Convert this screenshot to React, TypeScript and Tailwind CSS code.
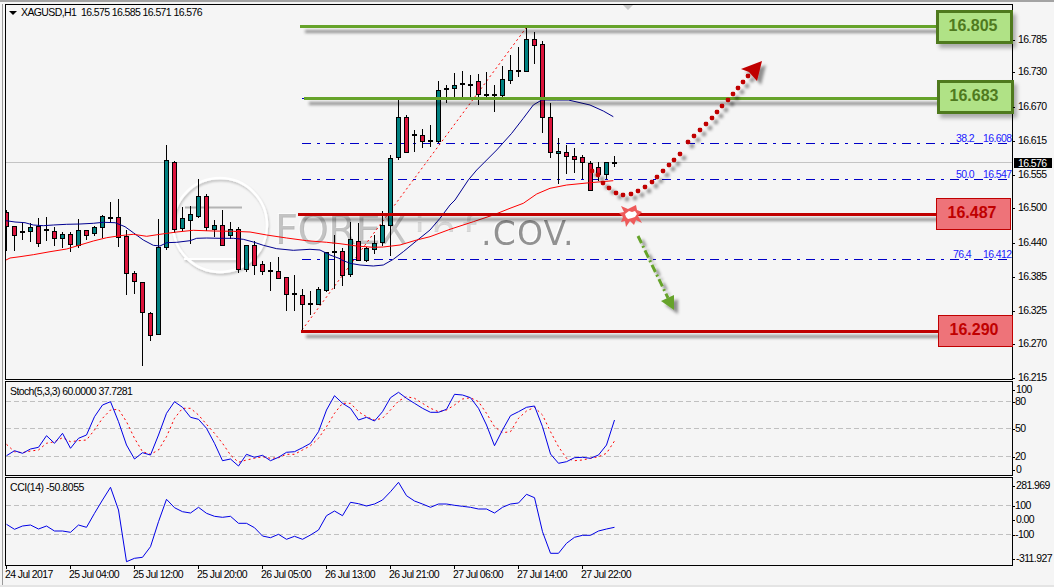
import React from "react";

type C = [number, number, number, number, "r" | "t" | "d"];
const candles: C[] = [
  [210,212,226,250,"r"],[226,226,235,250,"r"],[223,231,232,239,"d"],[223,227,231,241,"t"],[218,226,243,246,"r"],[217,229,230,240,"d"],
  [227,231,238,245,"r"],[232,234,238,247,"t"],[232,234,244,251,"r"],[219,230,245,247,"t"],[230,230,235,239,"r"],[226,227,233,235,"t"],
  [215,216,227,237,"t"],[202,217,218,222,"d"],[199,217,237,246,"r"],[230,236,273,294,"r"],[271,273,281,293,"r"],[282,282,312,365,"r"],
  [312,313,335,340,"r"],[219,247,334,334,"t"],[145,160,247,249,"t"],[161,162,229,232,"r"],[207,218,228,230,"t"],[206,214,220,243,"t"],
  [179,196,216,217,"t"],[194,196,227,230,"r"],[220,225,229,236,"t"],[210,225,245,245,"r"],[222,229,235,238,"t"],[227,229,269,272,"r"],
  [245,245,269,271,"t"],[241,245,265,274,"r"],[261,264,271,274,"r"],[262,270,271,290,"d"],[257,271,278,278,"r"],[277,277,294,310,"r"],
  [275,293,294,310,"d"],[289,295,304,330,"r"],[291,303,304,314,"d"],[287,289,304,304,"t"],[252,252,290,291,"t"],[235,251,252,288,"d"],
  [248,251,275,285,"r"],[222,239,274,276,"t"],[223,241,260,260,"r"],[247,248,260,261,"t"],[235,243,249,253,"t"],[211,225,242,245,"t"],
  [155,158,225,255,"t"],[97,117,157,159,"t"],[115,117,152,152,"r"],[130,134,135,151,"d"],[129,135,141,147,"r"],[125,140,141,146,"d"],
  [81,90,141,142,"t"],[85,88,89,102,"d"],[73,85,88,98,"t"],[71,83,84,98,"d"],[75,84,85,98,"d"],[74,81,94,104,"r"],
  [72,94,95,98,"d"],[85,94,95,111,"d"],[66,79,95,96,"t"],[55,70,80,83,"t"],[47,70,71,76,"d"],[28,39,71,71,"t"],
  [32,39,45,63,"r"],[41,44,117,132,"r"],[103,117,152,157,"r"],[138,151,153,183,"t"],[145,152,156,173,"r"],[148,156,159,172,"r"],
  [155,157,162,178,"r"],[161,163,190,190,"r"],[162,167,174,180,"r"],[162,162,174,178,"t"],[156,162,163,166,"d"],
];

const cx = (i: number) => 6 + 8 * i;
const pts = (a: number[][], ox: number, oy: number) => a.map(([x, y]) => `${(ox + x / 3).toFixed(1)},${(oy + y / 3).toFixed(1)}`).join(" ");
const series = (a: number[]) => a.map((z, i) => `${cx(i) + 0.5},${(375 + z / 3).toFixed(1)}`).join(" ");

const blueMa = [
  pts([[18,152],[45,156],[75,158],[100,165],[130,167],[160,165],[200,163],[240,162],[280,160],[310,157],[345,158],[375,170],[400,188],[430,210],[460,226],[480,228],[500,218],[530,217],[570,212],[590,205],[620,204],[660,205],[700,205],[730,208],[760,216],[790,226],[830,236],[880,241],[930,238],[960,240],[990,255],[1020,266]],0,170),
  pts([[0,268],[30,280],[60,285],[100,288],[130,285],[160,268],[190,245],[230,212],[270,180],[300,145],[330,105]],340,170),
  pts([[345,600],[385,540],[410,510],[470,450],[515,400],[550,355],[580,315],[605,300],[650,300],[685,300],[720,308],[750,315],[790,333],[820,350]],340,0),
].join(" ");
const redMa = [
  pts([[18,270],[30,264],[60,260],[100,254],[150,245],[200,237],[240,225],[280,213],[320,203],[360,197],[400,193],[440,199],[480,193],[530,186],[580,181],[640,183],[700,184],[750,186],[800,195],[860,204],[920,212],[980,217]],0,170),
  pts([[0,221],[50,228],[100,232],[130,231],[180,225],[230,210],[270,200],[330,178],[400,155],[460,135],[510,115],[550,100],[590,72],[630,55],[680,45],[750,38],[820,32]],340,170),
].join(" ");

const stochMain = [242,227,235,222,217,182,205,175,220,190,180,125,90,80,140,210,252,233,240,180,115,80,97,127,133,160,205,257,252,273,238,247,241,257,247,232,230,218,205,170,105,62,85,100,135,127,138,110,68,52,70,85,100,112,112,103,58,60,68,100,150,212,165,122,110,97,93,155,237,265,260,248,247,250,240,210,135];
const stochSig = [208,230,233,228,225,205,200,188,200,197,195,165,130,105,103,140,190,230,238,225,185,130,100,100,120,148,175,205,240,262,255,250,245,250,248,238,238,225,212,190,155,115,85,85,110,125,135,130,105,78,65,70,85,100,110,105,90,72,68,80,115,155,173,170,130,108,97,120,170,215,250,257,255,250,245,235,198];
const cci = [448,463,453,450,462,453,468,468,472,450,457,415,375,337,405,560,550,547,515,440,373,398,410,414,397,415,424,427,424,445,445,458,483,488,478,493,484,493,480,465,422,408,422,382,386,393,387,375,350,322,362,378,387,397,387,387,391,394,397,402,402,414,397,387,384,358,368,470,535,535,505,487,481,481,468,462,457];

const dots = [[592,171],[598,175],[603,183],[609,188],[616,193],[623,195],[631,194],[638,191],[645,187],[652,182],[657,177],[663,171],[669,165],[674,160],[680,154],[688,142],[694,136],[700,130],[706,124],[712,118],[717,112],[722,106],[728,100],[733,94],[738,88],[743,82],[748,76]];

const priceScale: [string, number][] = [["16.785",39],["16.730",71],["16.670",106],["16.615",140],["16.555",174],["16.500",207],["16.440",242],["16.385",276],["16.325",310],["16.270",343],["16.215",377]];
const stochScale: [string, number, number][] = [["100",389,1],["80",401,0],["50",428,0],["20",456,0],["0",469,1]];
const cciScale: [string, number, number][] = [["281.969",485,1],["100",505,0],["0.00",519,1],["-100",534,0],["-311.927",558,1]];
const times = ["24 Jul 2017","25 Jul 04:00","25 Jul 12:00","25 Jul 20:00","26 Jul 05:00","26 Jul 13:00","26 Jul 21:00","27 Jul 06:00","27 Jul 14:00","27 Jul 22:00"];
const fibLabels: [string, number, number][] = [["38.2",956,138],["16.608",983,138],["50.0",956,174],["16.547",983,174],["76.4",953,254],["16.412",983,254]];

function LevelBox({ text, className }: { text: string; className: string }) {
  return <div className={`absolute flex items-center justify-center pr-[3px] pb-[3px] font-bold text-[16px] leading-none tracking-normal ${className}`}>{text}</div>;
}

function ScaleLabel({ t, y, top, pad }: { t: string; y: number; top: number; pad: number }) {
  return (
    <div className="absolute left-0 flex items-center h-[12px] -translate-y-1/2 whitespace-nowrap" style={{ top: y - top + 1 }}>
      <span className="block w-[2px] h-[1px] bg-black" style={{ marginRight: pad }} />
      <span>{t}</span>
    </div>
  );
}

export default function App() {
  return (
    <div className="w-[1054px] h-[587px] overflow-hidden bg-[#f5f5f5] text-black text-[10.5px] tracking-[-0.6px] font-['Liberation_Sans',Arial,sans-serif] border-t-2 border-t-[#a3a3a3] pt-[2px] pl-[2px] border-b-2 border-b-[#e4e4e4]">
      <div className="border-l border-l-[#9a9a9a] pl-[2px] h-full flex flex-col">
        {/* main chart row */}
        <div className="flex h-[376px]">
          <div className="relative w-[1008px] h-full border border-black">
            <svg className="absolute inset-0" width="1006" height="374" viewBox="6 5 1006 374">
              <defs>
                <filter id="sh" x="-5%" y="-400%" width="110%" height="900%">
                  <feDropShadow dx="5" dy="5" stdDeviation="1.5" floodColor="#000" floodOpacity="0.42" />
                </filter>
                <filter id="sh2" x="-30%" y="-30%" width="170%" height="170%">
                  <feDropShadow dx="4" dy="4" stdDeviation="1.8" floodColor="#000" floodOpacity="0.42" />
                </filter>
                <filter id="ring" x="-20%" y="-20%" width="140%" height="140%">
                  <feDropShadow dx="1" dy="2" stdDeviation="1" floodColor="#000" floodOpacity="0.22" />
                </filter>
                <filter id="wm" x="-10%" y="-30%" width="120%" height="160%">
                  <feGaussianBlur stdDeviation="0.4" />
                  <feDropShadow dx="-1" dy="-1" stdDeviation="0.6" floodColor="#ffffff" floodOpacity="1" />
                </filter>
                <clipPath id="inf-clip">
                  <rect x="410" y="200" width="80" height="32" />
                </clipPath>
              </defs>

              <line x1="6" x2="1012" y1="162.5" y2="162.5" stroke="#c4c4c4" />

              {/* watermark */}
              <g filter="url(#ring)">
                <circle cx="220" cy="225" r="47" fill="none" stroke="#ffffff" strokeWidth="2.5" />
                <rect x="184" y="258" width="56" height="2" fill="#ffffff" />
              </g>
              <rect x="185" y="206.5" width="57" height="2" fill="#b4b4b4" />
              <g filter="url(#wm)" fontFamily="'DejaVu Sans', sans-serif" fill="#929292">
                <text x="275" y="244" fontSize="40" opacity="0.6">FOREX</text>
                <g clipPath="url(#inf-clip)">
                  <text x="414" y="244" fontSize="40" opacity="0.35" letterSpacing="6">inf</text>
                </g>
                <text x="481" y="245" fontSize="33" letterSpacing="1.2">.COV.</text>
              </g>

              {/* fibonacci */}
              {[98.5, 143.5, 179.5, 259.5].map((y) => (
                <line key={y} x1="302" x2="1007" y1={y} y2={y} stroke="#0000c8" strokeDasharray="9 6 3 6" />
              ))}
              <line x1="302" y1="330" x2="526" y2="28" stroke="#ff0000" strokeDasharray="2 3" />

              {/* candles */}
              {candles.map(([hi, top, bot, lo, k], i) => {
                const c = cx(i);
                return (
                  <g key={i} shapeRendering="crispEdges">
                    <line x1={c + 0.5} x2={c + 0.5} y1={hi} y2={lo + 1} stroke="#000" />
                    {k === "d" ? (
                      <rect x={c - 2} y={top} width="5" height="2" fill="#000" />
                    ) : (
                      <rect x={c - 1.5} y={top + 0.5} width="4" height={bot - top} fill={k === "r" ? "#dc143c" : "#008080"} stroke="#000" />
                    )}
                  </g>
                );
              })}

              {/* moving averages */}
              <polyline points={blueMa} fill="none" stroke="#000090" />
              <polyline points={redMa} fill="none" stroke="#ff0000" />

              {/* levels */}
              <rect x="300" y="25" width="640" height="3" fill="#66a32c" filter="url(#sh)" />
              <rect x="304" y="97" width="636" height="3" fill="#66a32c" filter="url(#sh)" />
              <rect x="298" y="213" width="642" height="3" fill="#c00000" filter="url(#sh)" />
              <rect x="301" y="330" width="640" height="3" fill="#c00000" filter="url(#sh)" />

              {/* dotted red arrow */}
              <g filter="url(#sh2)">
                {dots.map(([x, y]) => (
                  <rect key={`${x}-${y}`} x={x - 2.2} y={y - 2.2} width="4.4" height="4.4" rx="1.4" fill="#c00000" />
                ))}
                <polygon points="762,61 741,69 749,72 757,81" fill="#c00000" />
              </g>

              {/* burst */}
              <polygon
                points="621,206 628,209 636,205 637,210 642,212 638,216 642,223 636,220 634,225 630,221 626,227 625,221 621,222 623,217 619,213 624,212"
                fill="#ee5a5a"
              />
              <polygon points="625,214 629,211 632,212 635,211 637,214 635,217 632,218 628,219 626,217" fill="#ffffff" />

              {/* green arrow */}
              <g filter="url(#sh2)">
                <line x1="638" y1="236" x2="668" y2="298" stroke="#66a32c" strokeWidth="3" strokeDasharray="8 3 2 3" />
                <polygon points="674,295 661,301 674,310" fill="#66a32c" />
              </g>

              <polygon points="623,5 633,5 628,10" fill="#c8c8c8" />
            </svg>

            {/* header */}
            <div className="absolute left-[3px] top-[2px] flex items-center h-[12px] whitespace-pre">
              <span className="block w-0 h-0 border-x-[4px] border-x-transparent border-t-[4px] border-t-black mr-[4px]" />
              <span>XAGUSD,H1  16.575 16.585 16.571 16.576</span>
            </div>

            {/* level labels */}
            <LevelBox text="16.805" className="left-[930px] top-[5px] w-[77px] h-[34px] bg-[#b0e286] border-[3px] border-[#4f7a1e] text-[#4f7a1e] shadow-[3px_4px_4px_rgba(0,0,0,0.3)]" />
            <LevelBox text="16.683" className="left-[931px] top-[75px] w-[77px] h-[34px] bg-[#b0e286] border-[3px] border-[#4f7a1e] text-[#4f7a1e] shadow-[3px_4px_4px_rgba(0,0,0,0.3)]" />
            <LevelBox text="16.487" className="left-[930px] top-[193px] w-[75px] h-[32px] bg-[#ee7379] border border-[#c00000] text-[#c00000]" />
            <LevelBox text="16.290" className="left-[932px] top-[310px] w-[75px] h-[32px] bg-[#ee7379] border border-[#c00000] text-[#c00000]" />

            {/* fibonacci labels */}
            {fibLabels.map(([t, x, y]) => (
              <div key={t} className="absolute leading-[12px] text-[#1a1aff] -translate-y-1/2" style={{ left: x - 6, top: y - 5 }}>
                {t}
              </div>
            ))}
          </div>
          <div className="relative flex-1">
            {priceScale.map(([t, y]) => (
              <ScaleLabel key={t} t={t} y={y} top={4} pad={3} />
            ))}
            <div className="absolute left-[1px] top-[154px] w-[38px] h-[10px] bg-black text-white leading-[10px] pl-[4px]">16.576</div>
          </div>
        </div>

        {/* stochastic */}
        <div className="flex h-[95px] mt-[1px]">
          <div className="relative w-[1008px] h-full border border-black">
            <svg className="absolute inset-0" width="1006" height="93" viewBox="6 382 1006 93">
              {[401.5, 428.5, 456.5].map((y) => (
                <line key={y} x1="6" x2="1012" y1={y} y2={y} stroke="#c0c0c0" strokeDasharray="5 3" />
              ))}
              <polyline points={series(stochSig)} fill="none" stroke="#ff0000" strokeDasharray="2 3" />
              <polyline points={series(stochMain)} fill="none" stroke="#0000e6" />
            </svg>
            <div className="absolute left-[4px] top-[3px] leading-[12px] whitespace-pre">Stoch(5,3,3) 60.0000 37.7281</div>
          </div>
          <div className="relative flex-1">
            {stochScale.map(([t, y, p]) => (
              <ScaleLabel key={t} t={t} y={y} top={381} pad={p} />
            ))}
          </div>
        </div>

        {/* CCI */}
        <div className="flex h-[89px] mt-[1px]">
          <div className="relative w-[1008px] h-full border border-black">
            <svg className="absolute inset-0" width="1006" height="87" viewBox="6 478 1006 87">
              {[505.5, 534.5].map((y) => (
                <line key={y} x1="6" x2="1012" y1={y} y2={y} stroke="#c0c0c0" strokeDasharray="5 3" />
              ))}
              <polyline points={series(cci)} fill="none" stroke="#0000e6" />
            </svg>
            <div className="absolute left-[4px] top-[3px] leading-[12px] whitespace-pre tracking-[-0.45px]">CCI(14) -50.8055</div>
          </div>
          <div className="relative flex-1">
            {cciScale.map(([t, y, p]) => (
              <ScaleLabel key={t} t={t} y={y} top={477} pad={p} />
            ))}
          </div>
        </div>

        {/* time axis */}
        <div className="flex w-[1008px] h-[17px]">
          {times.map((t) => (
            <div key={t} className="w-[64px] flex flex-col items-start">
              <span className="block w-[1px] h-[3px] bg-black ml-[1px]" />
              <span className="block leading-[12px] -mt-[1px] whitespace-nowrap">{t}</span>
            </div>
          ))}
        </div>
      </div>
    </div>
  );
}
